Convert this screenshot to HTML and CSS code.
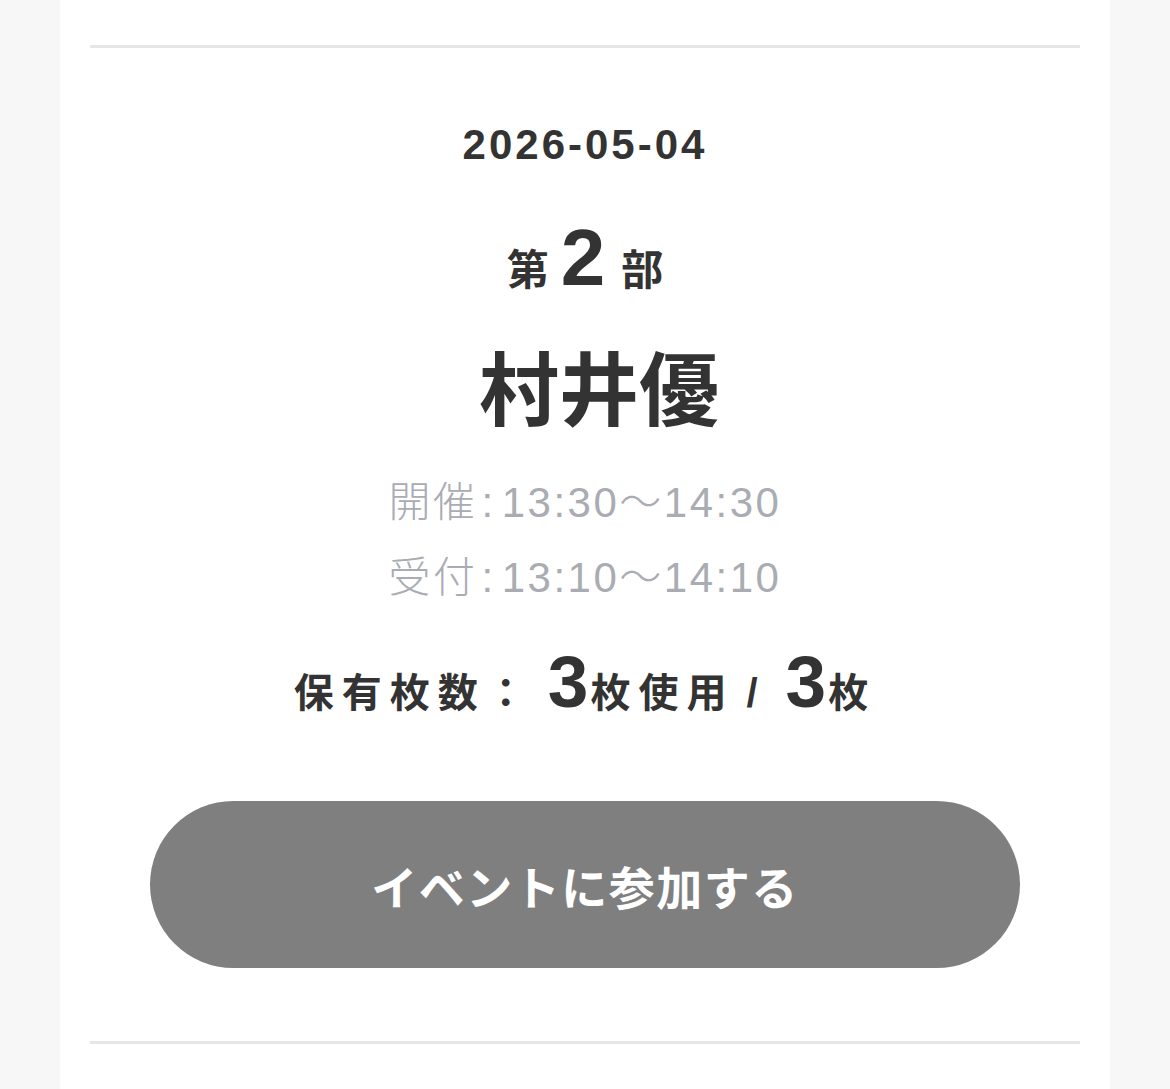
FILE: index.html
```html
<!DOCTYPE html>
<html lang="ja">
  <head>
    <meta charset="UTF-8" />
    <meta name="viewport" content="width=device-width, initial-scale=1.0" />
    <title>イベント参加</title>
    <link rel="stylesheet" href="styles.css">
  </head>
  <body>
    <div class="card">
      <div class="divider"></div>
      <div class="event">
        <div class="date">2026-05-04</div>
        <div class="part">第<span class="part-num">2</span>部</div>
        <div class="member">村井優</div>
        <div class="times">
          <div class="time-row">開催<span class="colon">:</span>13:30〜14:30</div>
          <div class="time-row">受付<span class="colon">:</span>13:10〜14:10</div>
        </div>
        <div class="tickets">
          保有枚数：<span class="big">3</span>枚使用<span class="slash">/</span><span class="big">3</span>枚
        </div>
        <button class="join-button">イベントに参加する</button>
      </div>
      <div class="divider"></div>
    </div>
  </body>
</html>
```

FILE: styles.css
```css
body {
  margin: 0;
  background-color: #f7f7f7;
  font-family: "Liberation Sans", "Noto Sans CJK JP", sans-serif;
  color: #333;
}
.card {
  margin: 0 60px;
  padding: 45px 30px 46px;
  background-color: #fff;
}
.divider {
  height: 3px;
  background-color: #e6e6e6;
}
.event {
  display: flex;
  flex-direction: column;
  align-items: center;
  padding: 72px 0 73px;
}
.date {
  font-size: 42px;
  font-weight: bold;
  letter-spacing: 3px;
  line-height: 50px;
}
.part {
  margin-top: 48px;
  font-size: 42px;
  font-weight: bold;
  line-height: 80px;
}
.part-num {
  font-family: "Liberation Sans", sans-serif;
  font-size: 80px;
  margin: 0 16px 0 12px;
}
.member {
  margin-top: 36px;
  padding-left: 28px;
  font-size: 80px;
  font-weight: bold;
  line-height: 90px;
}
.times {
  margin-top: 28px;
  color: #a9acb2;
  font-size: 42px;
  font-weight: 300;
  letter-spacing: 2.5px;
}
.time-row {
  line-height: 75px;
}
.colon {
  margin: 0 6px 0 4px;
}
.tickets {
  margin-top: 27px;
  font-size: 40px;
  font-weight: bold;
  letter-spacing: 8px;
  line-height: 80px;
}
.tickets .big {
  font-size: 73px;
  letter-spacing: 2px;
  margin-left: 14px;
}
.tickets .slash {
  letter-spacing: 0;
  margin: 0 14px 0 12px;
}
.join-button {
  margin-top: 68px;
  width: 870px;
  height: 167px;
  border: none;
  border-radius: 84px;
  background-color: #7f7f7f;
  color: #fff;
  font-family: "Noto Sans CJK JP", sans-serif;
  font-size: 46px;
  font-weight: bold;
  letter-spacing: 1.5px;
}
```
